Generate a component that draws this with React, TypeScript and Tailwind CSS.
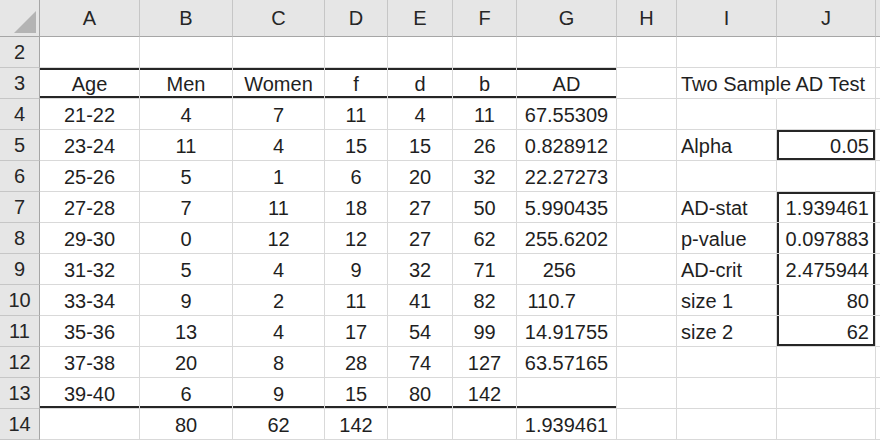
import React from "react";

const cols = ["A","B","C","D","E","F","G","H","I","J"];
const rows: (string)[][] = [
  ["","","","","","","","","",""],
  ["Age","Men","Women","f","d","b","AD","","Two Sample AD Test",""],
  ["21-22","4","7","11","4","11","67.55309","","",""],
  ["23-24","11","4","15","15","26","0.828912","","Alpha","0.05"],
  ["25-26","5","1","6","20","32","22.27273","","",""],
  ["27-28","7","11","18","27","50","5.990435","","AD-stat","1.939461"],
  ["29-30","0","12","12","27","62","255.6202","","p-value","0.097883"],
  ["31-32","5","4","9","32","71","256","","AD-crit","2.475944"],
  ["33-34","9","2","11","41","82","110.7","","size 1","80"],
  ["35-36","13","4","17","54","99","14.91755","","size 2","62"],
  ["37-38","20","8","28","74","127","63.57165","","",""],
  ["39-40","6","9","15","80","142","","","",""],
  ["","80","62","142","","","1.939461","","",""],
];

function shadowFor(r: number, c: number): string {
  const rowNum = r + 2;
  if (c <= 6) {
    if (rowNum === 3) return "shadow-[inset_0_2px_0_#262626,inset_0_-2px_0_#262626]";
    if (rowNum === 13) return "shadow-[inset_0_-2px_0_#262626]";
    return "";
  }
  if (c === 9) {
    if (rowNum === 5) return "shadow-[inset_0_0_0_2px_#262626]";
    if (rowNum === 7) return "shadow-[inset_2px_0_0_#262626,inset_-2px_0_0_#262626,inset_0_2px_0_#262626]";
    if (rowNum >= 8 && rowNum <= 10) return "shadow-[inset_2px_0_0_#262626,inset_-2px_0_0_#262626]";
    if (rowNum === 11) return "shadow-[inset_2px_0_0_#262626,inset_-2px_0_0_#262626,inset_0_-2px_0_#262626]";
  }
  return "";
}

export default function App() {
  return (
    <div
      className="w-[880px] h-[444px] overflow-hidden bg-white text-[#1f1f1f] text-[20px] leading-none"
      style={{ fontFamily: '"Liberation Sans", Arial, sans-serif' }}
    >
      <div className="grid grid-cols-[40px_100px_93px_92px_63px_65px_64px_100px_60px_100px_99px_1fr] grid-rows-[37px_repeat(13,31px)]">
        <div className="bg-[#e6e6e6] border-r border-b border-[#a6a6a6] relative">
          <div className="absolute right-[3px] bottom-[3px] w-0 h-0 border-l-[22px] border-l-transparent border-b-[22px] border-b-[#b4b4b4]" />
        </div>
        {cols.map((c) => (
          <div key={c} className="bg-[#e6e6e6] border-r border-[#c6c6c6] border-b border-b-[#a6a6a6] flex items-center justify-center text-[20px] text-[#262626]">
            {c}
          </div>
        ))}
        <div className="bg-[#e6e6e6] border-b border-[#a6a6a6]" />
        {rows.map((row, r) => (
          <React.Fragment key={r}>
            <div className="bg-[#e6e6e6] border-r border-[#a6a6a6] border-b border-b-[#c6c6c6] flex items-center justify-center text-[#262626]">
              {r + 2}
            </div>
            {row.map((v, c) => {
              let align = "justify-center";
              if (c === 8) align = "justify-start pl-[4px] overflow-visible whitespace-nowrap z-10";
              else if (c === 9) align = "justify-end pr-[6px]";
              else if (c === 6 && (v === "256" || v === "110.7")) align = "justify-end pr-[40px]";
              const hideRight = c === 8 && r === 1 ? "border-r-transparent" : "";
              return (
                <div
                  key={c}
                  className={`border-r border-b border-[#d9d9d9] flex items-center pt-[2px] ${align} ${hideRight} ${shadowFor(r, c)}`}
                >
                  {v}
                </div>
              );
            })}
            <div className="border-b border-[#d9d9d9]" />
          </React.Fragment>
        ))}
      </div>
    </div>
  );
}
